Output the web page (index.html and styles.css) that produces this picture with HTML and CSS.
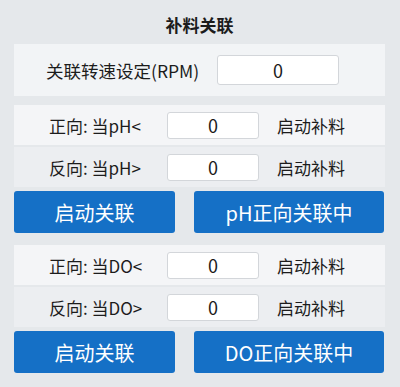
FILE: index.html
```html
<!DOCTYPE html>
<html lang="zh-CN">
<head>
<meta charset="utf-8">
<title>补料关联</title>
<link rel="stylesheet" href="styles.css">
</head>
<body>
<div class="page">
  <div class="title">补料关联</div>
  <div class="rpm-panel">
    <span class="rpm-label">关联转速设定(RPM)</span>
    <input class="field rpm-field" type="text" value="0">
  </div>

  <div class="section">
    <div class="row row-a">
      <span class="row-label">正向: 当pH&lt;</span>
      <input class="field" type="text" value="0">
      <span class="row-tail">启动补料</span>
    </div>
    <div class="row row-b">
      <span class="row-label">反向: 当pH&gt;</span>
      <input class="field" type="text" value="0">
      <span class="row-tail">启动补料</span>
    </div>
    <div class="buttons">
      <button class="btn">启动关联</button>
      <button class="btn">pH正向关联中</button>
    </div>
  </div>

  <div class="section">
    <div class="row row-a">
      <span class="row-label">正向: 当DO&lt;</span>
      <input class="field" type="text" value="0">
      <span class="row-tail">启动补料</span>
    </div>
    <div class="row row-b">
      <span class="row-label">反向: 当DO&gt;</span>
      <input class="field" type="text" value="0">
      <span class="row-tail">启动补料</span>
    </div>
    <div class="buttons">
      <button class="btn">启动关联</button>
      <button class="btn">DO正向关联中</button>
    </div>
  </div>
</div>
</body>
</html>
```

FILE: styles.css
```css
* { box-sizing: border-box; }
html, body {
  margin: 0;
  padding: 0;
  background: #e5e8eb;
}
body {
  font-family: "Noto Sans CJK SC", "Noto Sans", sans-serif;
  color: #1c1c1c;
  width: 400px;
  height: 387px;
  overflow: hidden;
}
.page {
  padding: 5px 15px 0 14px;
}
.title {
  height: 39px;
  line-height: 39px;
  text-align: center;
  font-size: 17px;
  font-weight: bold;
}
.rpm-panel {
  height: 52px;
  background: #f2f4f6;
  display: flex;
  align-items: center;
  padding-left: 32px;
  gap: 14px;
  margin-bottom: 9px;
}
.rpm-label {
  font-size: 17.5px;
  width: 157px;
  white-space: nowrap;
}
.field {
  width: 92px;
  height: 27px;
  border: 1px solid #d3d6da;
  border-radius: 3px;
  background: #ffffff;
  text-align: center;
  font-family: "Noto Sans CJK SC", "Noto Sans", sans-serif;
  font-size: 18px;
  color: #1c1c1c;
  padding: 0;
  outline: none;
}
.rpm-field {
  width: 122px;
  height: 30px;
}
.section {
  margin-bottom: 12px;
}
.row {
  height: 40px;
  display: grid;
  grid-template-columns: 153px 92px auto;
  align-items: center;
  font-size: 17px;
}
.row-a {
  background: #f4f5f7;
  margin-bottom: 2px;
}
.row-b {
  background: #eceef1;
  margin-bottom: 4px;
}
.row-label {
  padding-left: 35px;
  white-space: nowrap;
}
.row-tail {
  padding-left: 18px;
  white-space: nowrap;
}
.buttons {
  display: grid;
  grid-template-columns: 161px 190px;
  column-gap: 19px;
}
.btn {
  height: 42px;
  border: none;
  border-radius: 3px;
  background: #1570c6;
  color: #ffffff;
  font-family: "Noto Sans CJK SC", "Noto Sans", sans-serif;
  font-size: 20px;
  padding: 0;
  cursor: pointer;
}
```
